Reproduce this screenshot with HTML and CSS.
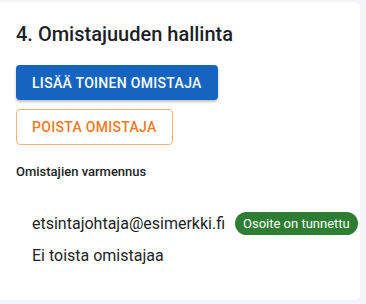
FILE: index.html
```html
<!DOCTYPE html>
<html lang="fi">
<head>
  <meta charset="UTF-8">
  <title>Omistajuuden hallinta</title>
  <link rel="stylesheet" href="styles.css">
</head>
<body>
  <div class="card">
    <h2 class="card-title">4. Omistajuuden hallinta</h2>

    <div class="actions">
      <button class="btn btn-primary">Lisää toinen omistaja</button>
      <button class="btn btn-outline">Poista omistaja</button>
    </div>

    <h3 class="section-title">Omistajien varmennus</h3>

    <div class="owner-list">
      <div class="owner-row">
        <span class="owner-email">etsintajohtaja@esimerkki.fi</span>
        <span class="chip chip-ok">Osoite on tunnettu</span>
      </div>
      <div class="owner-row">
        <span class="owner-empty">Ei toista omistajaa</span>
      </div>
    </div>
  </div>
</body>
</html>
```

FILE: styles.css
```css
body {
  margin: 0;
  background-color: #f3f5f8;
  font-family: Roboto, "Liberation Sans", sans-serif;
  color: #1c1f26;
}

.card {
  background-color: #ffffff;
  width: 360px;
  height: 298px;
  margin-top: 2px;
  border-radius: 0 6px 6px 0;
  box-sizing: border-box;
  padding: 20px 16px 0 16px;
}

.card-title {
  font-size: 20px;
  font-weight: 500;
  margin: 0 0 19px 0;
  line-height: 24px;
}

.actions {
  display: flex;
  flex-direction: column;
  align-items: flex-start;
  gap: 9px;
}

.btn {
  font-family: Roboto, "Liberation Sans", sans-serif;
  font-size: 14px;
  font-weight: 500;
  text-transform: uppercase;
  letter-spacing: 0.3px;
  height: 36px;
  padding: 0 16px;
  border-radius: 4px;
  cursor: pointer;
}

.btn-primary {
  background-color: #1565c0;
  color: #ffffff;
  border: none;
  box-shadow: 0 2px 3px rgba(0,0,0,0.25);
  height: 35px;
  padding: 0 16px;
}

.btn-outline {
  background-color: #ffffff;
  color: #ef7a1f;
  border: 1px solid #f5b27d;
  padding: 0 15px;
}

.section-title {
  font-size: 13px;
  font-weight: 500;
  margin: 18px 0 0 0;
  line-height: 18px;
}

.owner-list {
  padding: 30px 0 0 16px;
}

.owner-row {
  display: flex;
  align-items: center;
  gap: 10px;
  min-height: 24px;
  margin-bottom: 8px;
  font-size: 16px;
}

.chip {
  flex-shrink: 0;
  white-space: nowrap;
  font-size: 13px;
  padding: 0 8px;
  height: 23px;
  line-height: 23px;
  border-radius: 12px;
}

.chip-ok {
  background-color: #2e7d32;
  color: #ffffff;
}
```
